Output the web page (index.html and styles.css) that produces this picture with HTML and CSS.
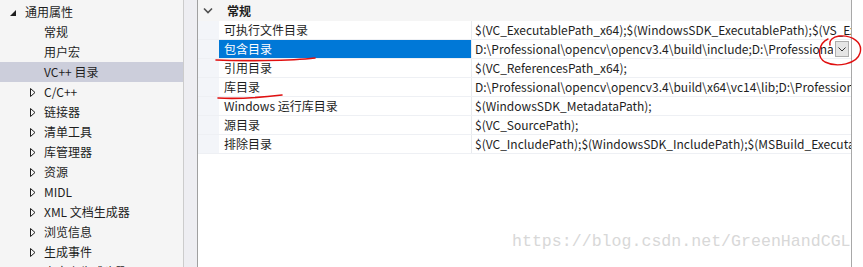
FILE: index.html
```html
<!DOCTYPE html>
<html lang="zh-CN">
<head>
    <meta charset="UTF-8">
    <title>VC++ 目录 属性页</title>
    <link rel="stylesheet" href="styles.css">
</head>
<body>
    <div class="app">
        <div class="tree">
            <div class="node root"><span class="exp"></span>通用属性</div>
            <div class="node child">常规</div>
            <div class="node child">用户宏</div>
            <div class="node child selected">VC++ 目录</div>
            <div class="node branch"><svg class="col" width="6" height="9" viewBox="0 0 6 9"><path d="M0.5 0.5 L5 4.5 L0.5 8.5 Z" fill="none" stroke="#1e1e1e" stroke-width="1"/></svg>C/C++</div>
            <div class="node branch"><svg class="col" width="6" height="9" viewBox="0 0 6 9"><path d="M0.5 0.5 L5 4.5 L0.5 8.5 Z" fill="none" stroke="#1e1e1e" stroke-width="1"/></svg>链接器</div>
            <div class="node branch"><svg class="col" width="6" height="9" viewBox="0 0 6 9"><path d="M0.5 0.5 L5 4.5 L0.5 8.5 Z" fill="none" stroke="#1e1e1e" stroke-width="1"/></svg>清单工具</div>
            <div class="node branch"><svg class="col" width="6" height="9" viewBox="0 0 6 9"><path d="M0.5 0.5 L5 4.5 L0.5 8.5 Z" fill="none" stroke="#1e1e1e" stroke-width="1"/></svg>库管理器</div>
            <div class="node branch"><svg class="col" width="6" height="9" viewBox="0 0 6 9"><path d="M0.5 0.5 L5 4.5 L0.5 8.5 Z" fill="none" stroke="#1e1e1e" stroke-width="1"/></svg>资源</div>
            <div class="node branch"><svg class="col" width="6" height="9" viewBox="0 0 6 9"><path d="M0.5 0.5 L5 4.5 L0.5 8.5 Z" fill="none" stroke="#1e1e1e" stroke-width="1"/></svg>MIDL</div>
            <div class="node branch"><svg class="col" width="6" height="9" viewBox="0 0 6 9"><path d="M0.5 0.5 L5 4.5 L0.5 8.5 Z" fill="none" stroke="#1e1e1e" stroke-width="1"/></svg>XML 文档生成器</div>
            <div class="node branch"><svg class="col" width="6" height="9" viewBox="0 0 6 9"><path d="M0.5 0.5 L5 4.5 L0.5 8.5 Z" fill="none" stroke="#1e1e1e" stroke-width="1"/></svg>浏览信息</div>
            <div class="node branch"><svg class="col" width="6" height="9" viewBox="0 0 6 9"><path d="M0.5 0.5 L5 4.5 L0.5 8.5 Z" fill="none" stroke="#1e1e1e" stroke-width="1"/></svg>生成事件</div>
            <div class="node branch"><svg class="col" width="6" height="9" viewBox="0 0 6 9"><path d="M0.5 0.5 L5 4.5 L0.5 8.5 Z" fill="none" stroke="#1e1e1e" stroke-width="1"/></svg>自定义生成步骤</div>
        </div>

        <div class="splitter"></div>

        <div class="grid">
            <div class="category">
                <span class="chev">
                    <svg width="10" height="7" viewBox="0 0 10 7"><path d="M1 1.5 L5 5.5 L9 1.5" fill="none" stroke="#505050" stroke-width="1.6"/></svg>
                </span>
                常规
            </div>
            <div class="row">
                <div class="gutter"></div>
                <div class="name">可执行文件目录</div>
                <div class="value">$(VC_ExecutablePath_x64);$(WindowsSDK_ExecutablePath);$(VS_ExecutablePath);$(MSBuild_ExecutablePath)</div>
            </div>
            <div class="row active">
                <div class="gutter"></div>
                <div class="name">包含目录</div>
                <div class="value">
                    <span class="text">D:\Professional\opencv\opencv3.4\build\include;D:\Professional\opencv</span>
                    <span class="drop">
                        <svg width="8" height="5" viewBox="0 0 8 5"><path d="M0.5 0.5 L4 4 L7.5 0.5" fill="none" stroke="#333" stroke-width="1"/></svg>
                    </span>
                </div>
            </div>
            <div class="row">
                <div class="gutter"></div>
                <div class="name">引用目录</div>
                <div class="value">$(VC_ReferencesPath_x64);</div>
            </div>
            <div class="row">
                <div class="gutter"></div>
                <div class="name">库目录</div>
                <div class="value">D:\Professional\opencv\opencv3.4\build\x64\vc14\lib;D:\Professional\opencv</div>
            </div>
            <div class="row">
                <div class="gutter"></div>
                <div class="name">Windows 运行库目录</div>
                <div class="value">$(WindowsSDK_MetadataPath);</div>
            </div>
            <div class="row">
                <div class="gutter"></div>
                <div class="name">源目录</div>
                <div class="value">$(VC_SourcePath);</div>
            </div>
            <div class="row">
                <div class="gutter"></div>
                <div class="name">排除目录</div>
                <div class="value">$(VC_IncludePath);$(WindowsSDK_IncludePath);$(MSBuild_ExecutablePath);$(VC_LibraryPath_x64)</div>
            </div>
        </div>

        <div class="edge"></div>

        <!-- hand-drawn red marks on top of the screenshot -->
        <svg class="marks" width="863" height="267" viewBox="0 0 863 267">
            <path d="M216 60 C240 61 290 61 315 58" fill="none" stroke="#e01010" stroke-width="1.6" stroke-linecap="round"/>
            <path d="M218 98 C235 99 265 97 282 95" fill="none" stroke="#e01010" stroke-width="1.6" stroke-linecap="round"/>
            <path d="M828 39 C819 43 816 57 825 62 C837 68 857 64 860 53 C863 43 853 35 839 36 C833 37 829 40 830 45" fill="none" stroke="#e01010" stroke-width="1.4" stroke-linecap="round"/>
        </svg>
        <div class="watermark">https://blog.csdn.net/GreenHandCGL</div>
    </div>
</body>
</html>
```

FILE: styles.css
```css
body {
    margin: 0;
    background: #ffffff;
    font-family: "Noto Sans CJK SC", "Noto Sans", sans-serif;
    font-size: 12px;
    color: #1e1e1e;
}
.app {
    position: relative;
    display: flex;
    width: 863px;
    height: 267px;
    overflow: hidden;
}
.tree {
    width: 183px;
    flex-shrink: 0;
    background: #f5f5f5;
    border-right: 1px solid #cccccc;
    padding-top: 2px;
}
.node {
    height: 20px;
    line-height: 20px;
    white-space: nowrap;
    display: flex;
    align-items: center;
}
.node.root {
    padding-left: 10px;
}
.node.child {
    padding-left: 44px;
}
.node.branch {
    padding-left: 30px;
}
.node.selected {
    background: #cccedb;
}
.exp {
    width: 0;
    height: 0;
    border-left: 6px solid transparent;
    border-bottom: 6px solid #1e1e1e;
    margin-right: 9px;
    margin-top: 2px;
}
.col {
    margin-right: 8px;
    flex-shrink: 0;
}
.splitter {
    width: 13px;
    flex-shrink: 0;
    background: #eeeef2;
    border-right: 1px solid #a0a0a0;
}
.grid {
    width: 653px;
    flex-shrink: 0;
    background: #ffffff;
}
.category {
    height: 21px;
    display: flex;
    align-items: center;
    background: #f5f5f5;
    font-weight: bold;
}
.chev {
    width: 24px;
    padding-left: 5px;
    display: flex;
    align-items: center;
}
.row {
    display: flex;
    height: 18px;
    border-bottom: 1px solid #eef0f4;
}
.gutter {
    width: 21px;
    flex-shrink: 0;
    background: #f3f5f9;
}
.name {
    width: 247px;
    flex-shrink: 0;
    padding-left: 5px;
    line-height: 18px;
    border-right: 1px solid #e8eaee;
    white-space: nowrap;
}
.row.active .name {
    background: #0078d7;
    color: #ffffff;
}
.value {
    flex: 1;
    min-width: 0;
    padding-left: 3px;
    line-height: 18px;
    white-space: nowrap;
    overflow: hidden;
    display: flex;
}
.value .text {
    flex: 1;
    min-width: 0;
    overflow: hidden;
}
.drop {
    width: 14px;
    height: 16px;
    margin: 1px 2px 0 2px;
    flex-shrink: 0;
    background: #e5e5e5;
    border: 1px solid #adadad;
    box-sizing: border-box;
    display: flex;
    align-items: center;
    justify-content: center;
}
.edge {
    width: 1px;
    flex-shrink: 0;
    background: #a8a8a8;
}
.marks {
    position: absolute;
    left: 0;
    top: 0;
    pointer-events: none;
}
.watermark {
    position: absolute;
    left: 512px;
    top: 232px;
    font-family: "Liberation Mono", monospace;
    font-size: 16.6px;
    color: #d8d8d8;
    white-space: nowrap;
}
```
